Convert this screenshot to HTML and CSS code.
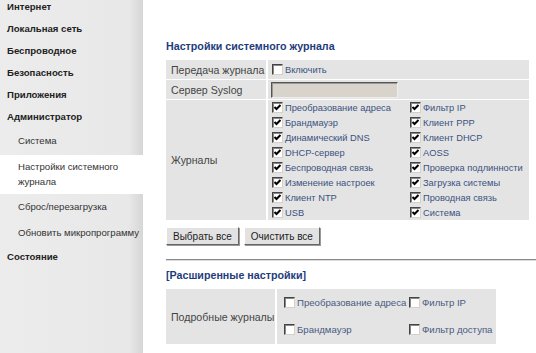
FILE: index.html
```html
<!DOCTYPE html>
<html lang="ru">
<head>
    <meta charset="UTF-8">
    <title>Настройки системного журнала</title>
    <link rel="stylesheet" href="styles.css">
</head>
<body>
    <div class="page">
        <div class="sidebar">
            <div class="menu">
                <div class="item">Интернет</div>
                <div class="item">Локальная сеть</div>
                <div class="item">Беспроводное</div>
                <div class="item">Безопасность</div>
                <div class="item">Приложения</div>
                <div class="item">Администратор</div>
                <div class="sub">Система</div>
                <div class="sub active">Настройки системного<br>журнала</div>
                <div class="sub">Сброс/перезагрузка</div>
                <div class="sub">Обновить микропрограмму</div>
                <div class="item">Состояние</div>
            </div>
        </div>

        <div class="main">
            <h2 class="title">Настройки системного журнала</h2>
            <table class="form">
                <tr class="row-short">
                    <td class="label">Передача журнала</td>
                    <td class="value"><span class="check"><span class="box"></span>Включить</span></td>
                </tr>
                <tr class="row-short">
                    <td class="label">Сервер Syslog</td>
                    <td class="value"><input class="field" type="text"></td>
                </tr>
                <tr>
                    <td class="label">Журналы</td>
                    <td class="value">
                        <div class="logs">
                            <span class="check"><span class="box on"></span>Преобразование адреса</span>
                            <span class="check"><span class="box on"></span>Фильтр IP</span>
                            <span class="check"><span class="box on"></span>Брандмауэр</span>
                            <span class="check"><span class="box on"></span>Клиент PPP</span>
                            <span class="check"><span class="box on"></span>Динамический DNS</span>
                            <span class="check"><span class="box on"></span>Клиент DHCP</span>
                            <span class="check"><span class="box on"></span>DHCP-сервер</span>
                            <span class="check"><span class="box on"></span>AOSS</span>
                            <span class="check"><span class="box on"></span>Беспроводная связь</span>
                            <span class="check"><span class="box on"></span>Проверка подлинности</span>
                            <span class="check"><span class="box on"></span>Изменение настроек</span>
                            <span class="check"><span class="box on"></span>Загрузка системы</span>
                            <span class="check"><span class="box on"></span>Клиент NTP</span>
                            <span class="check"><span class="box on"></span>Проводная связь</span>
                            <span class="check"><span class="box on"></span>USB</span>
                            <span class="check"><span class="box on"></span>Система</span>
                        </div>
                    </td>
                </tr>
            </table>

            <div class="buttons">
                <button class="btn">Выбрать все</button>
                <button class="btn">Очистить все</button>
            </div>

            <hr class="sep">

            <h2 class="title">[Расширенные настройки]</h2>
            <table class="form detail">
                <tr>
                    <td class="label">Подробные журналы</td>
                    <td class="value">
                        <div class="detail-logs">
                            <span class="check"><span class="box"></span>Преобразование адреса</span>
                            <span class="check"><span class="box"></span>Фильтр IP</span>
                            <span class="check"><span class="box"></span>Брандмауэр</span>
                            <span class="check"><span class="box"></span>Фильтр доступа</span>
                        </div>
                    </td>
                </tr>
            </table>
        </div>
    </div>
</body>
</html>
```

FILE: styles.css
```css
body {
    margin: 0;
    font-family: "Liberation Sans", Arial, sans-serif;
    background-color: #fff;
    overflow: hidden;
}
.page {
    display: flex;
    height: 353px;
}
.sidebar {
    width: 143px;
    flex-shrink: 0;
    background: linear-gradient(to right, #ececec 0, #e8e8e8 90%, #d6d6d6 100%);
}
.menu {
    margin-top: -4px;
}
.item {
    height: 22px;
    line-height: 22px;
    padding-left: 7px;
    font-size: 9.6px;
    font-weight: bold;
    color: #222;
    white-space: nowrap;
}
.sub {
    height: 26px;
    line-height: 26px;
    padding-left: 18px;
    font-size: 9.6px;
    color: #333;
    white-space: nowrap;
}
.sub.active {
    height: auto;
    line-height: 15px;
    padding-top: 4px;
    padding-bottom: 5px;
    margin: 1px 0 0;
    background-color: #fff;
}
.main {
    flex: 1;
    padding-left: 23px;
    padding-top: 39px;
}
.title {
    margin: 0 0 7px;
    font-size: 10.7px;
    line-height: 14px;
    font-weight: bold;
    color: #1e3c7c;
}
.form {
    border-collapse: collapse;
    width: 364px;
    font-size: 10.6px;
    color: #444;
}
.form td {
    background-color: #e4e4e4;
    border: 1px solid #fff;
    padding: 0;
}
.form tr:first-child td {
    border-top: 0;
}
.form td:first-child {
    border-left: 0;
}
.form .label {
    width: 95px;
    padding-left: 5px;
    border-right-width: 2px;
    white-space: nowrap;
}
.row-short td {
    height: 19px;
}
.form .value {
    padding-left: 4px;
}
.check {
    display: flex;
    align-items: center;
    height: 15px;
    font-size: 9.3px;
    color: #3a5280;
    white-space: nowrap;
}
.box {
    display: inline-block;
    flex-shrink: 0;
    box-sizing: border-box;
    width: 11px;
    height: 11px;
    margin-right: 2px;
    background-color: #fff;
    border: 1px solid;
    border-color: #444 #d4d0c8 #d4d0c8 #444;
    box-shadow: inset 1px 1px 0 #888;
}
.box.on {
    background: #fff url("data:image/svg+xml,%3Csvg xmlns='http://www.w3.org/2000/svg' width='9' height='9'%3E%3Cpath d='M1.5 4 L3.5 6 L7.5 2' fill='none' stroke='%23000' stroke-width='2'/%3E%3C/svg%3E") no-repeat 0 0;
}
.field {
    display: block;
    box-sizing: border-box;
    width: 127px;
    height: 16px;
    margin: 0 0 0 -1px;
    background-color: #d8d4cc;
    border: 1px solid;
    border-color: #555 #eee #eee #555;
    box-shadow: inset 1px 1px 0 #999;
}
.logs {
    display: grid;
    grid-template-columns: 138px 1fr;
}
.buttons {
    display: flex;
    gap: 5px;
    margin-top: 6px;
}
.btn {
    height: 18px;
    padding: 0 6px;
    font-family: "Liberation Sans", Arial, sans-serif;
    font-size: 10px;
    color: #222;
    background-color: #e2e2e2;
    border: 1px solid;
    border-color: #fff #666 #666 #fff;
    box-shadow: 1px 1px 0 #999;
}
.sep {
    margin: 14px 0 7px;
    height: 0;
    border: 0;
    border-top: 1px solid #888;
    border-bottom: 1px solid #ddd;
}
.detail {
    width: 331px;
}
.detail .label {
    width: 104px;
}
.detail .value {
    padding: 6px 0 7px 7px;
}
.detail-logs {
    display: grid;
    grid-template-columns: 125px 1fr;
    row-gap: 12px;
}
.detail-logs .check {
    font-size: 9.6px;
    color: #4a5a80;
}
```
